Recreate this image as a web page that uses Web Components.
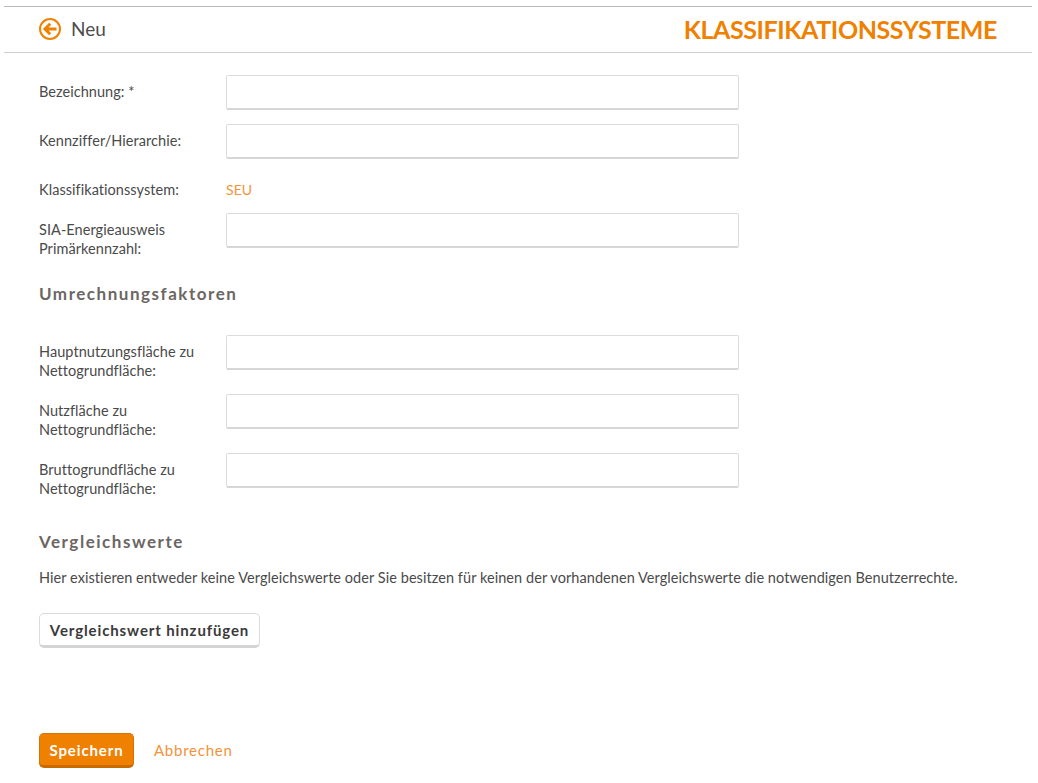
<!DOCTYPE html>
<html lang="de">
<head>
<meta charset="utf-8">
<title>Klassifikationssysteme</title>
<style>
    html, body { margin: 0; padding: 0; background: #fff; }
    body { font-family: "Lato", "Noto Sans", sans-serif; color: #4a4a4a; font-variant-ligatures: none; }
</style>
</head>
<body>
<app-page>
    <page-header slot="header" caption="Neu" title-text="KLASSIFIKATIONSSYSTEME"></page-header>

    <form-row label="Bezeichnung: *"></form-row>
    <form-row label="Kennziffer/Hierarchie:"></form-row>
    <form-row label="Klassifikationssystem:" value="SEU"></form-row>
    <form-row label="SIA-Energieausweis Primärkennzahl:" class="narrow"></form-row>

    <section-title class="first">Umrechnungsfaktoren</section-title>

    <form-row label="Hauptnutzungsfläche zu Nettogrundfläche:"></form-row>
    <form-row label="Nutzfläche zu Nettogrundfläche:"></form-row>
    <form-row label="Bruttogrundfläche zu Nettogrundfläche:"></form-row>

    <section-title class="second">Vergleichswerte</section-title>
    <info-text>Hier existieren entweder keine Vergleichswerte oder Sie besitzen für keinen der vorhandenen Vergleichswerte die notwendigen Benutzerrechte.</info-text>

    <app-button class="add">Vergleichswert hinzufügen</app-button>

    <form-actions>
        <app-button kind="primary">Speichern</app-button>
        <a slot="link" href="#">Abbrechen</a>
    </form-actions>
</app-page>

<script>
class AppPage extends HTMLElement {
    constructor() {
        super();
        this.attachShadow({ mode: 'open' });
        this.shadowRoot.innerHTML = `
            <style>
                :host { display: block; padding-top: 6px; }
                .content { padding: 22px 0 0 39px; display: flex; flex-direction: column; align-items: flex-start; }
            </style>
            <slot name="header"></slot>
            <div class="content"><slot></slot></div>
        `;
    }
}

class PageHeader extends HTMLElement {
    constructor() {
        super();
        this.attachShadow({ mode: 'open' });
        this.shadowRoot.innerHTML = `
            <style>
                :host { display: flex; align-items: center; justify-content: space-between; box-sizing: border-box;
                    width: 1028px; height: 47px; margin-left: 4px; padding: 0 35px 2px;
                    border-top: 1px solid #b9b9b9; border-bottom: 1px solid #cfcfcf; }
                .left { display: flex; align-items: center; gap: 10px; }
                svg { display: block; width: 22px; height: 22px; }
                .caption { font-size: 19px; color: #4d4d4d; }
                .title { font-size: 25px; font-weight: 700; color: #f08000; letter-spacing: -0.4px; }
            </style>
            <div class="left">
                <svg viewBox="0 0 22 22" fill="none" stroke="#f08000" stroke-width="2">
                    <circle cx="11" cy="11" r="10"></circle>
                    <path d="M17.5 11H6.5M11.2 5.8 6 11l5.2 5.2" stroke-width="3"></path>
                </svg>
                <span class="caption"></span>
            </div>
            <span class="title"></span>
        `;
    }

    connectedCallback() {
        this.shadowRoot.querySelector('.caption').textContent = this.getAttribute('caption');
        this.shadowRoot.querySelector('.title').textContent = this.getAttribute('title-text');
    }
}

class FormRow extends HTMLElement {
    constructor() {
        super();
        this.attachShadow({ mode: 'open' });
        this.shadowRoot.innerHTML = `
            <style>
                :host { display: flex; align-items: flex-start; width: 700px; min-height: 26px; margin-bottom: 14px;
                    font-size: 14.5px; line-height: 19px; letter-spacing: 0.05px; color: #4a4a4a; }
                .label { width: 187px; padding-top: 7px; box-sizing: border-box; padding-right: 20px; }
                .control { box-sizing: border-box; width: 513px; height: 35px; border: 1px solid #dcdcdc;
                    border-bottom: 2px solid #d6d6d6; border-radius: 2px; background: #fff; margin: 0; padding: 0 8px; outline: none; }
                .value { padding-top: 7px; color: #f3923a; font-size: 14px; }
            </style>
            <div class="label"></div>
        `;
    }

    connectedCallback() {
        this.shadowRoot.querySelector('.label').textContent = this.getAttribute('label');
        if (this.hasAttribute('value')) {
            const value = document.createElement('div');
            value.className = 'value';
            value.textContent = this.getAttribute('value');
            this.shadowRoot.appendChild(value);
        } else {
            const input = document.createElement('input');
            input.className = 'control';
            input.type = 'text';
            this.shadowRoot.appendChild(input);
        }
    }
}

class SectionTitle extends HTMLElement {
    constructor() {
        super();
        this.attachShadow({ mode: 'open' });
        this.shadowRoot.innerHTML = `
            <style>
                :host { display: block; font-size: 17px; line-height: 22px; font-weight: 700; letter-spacing: 1.53px; color: #6b6663; }
                :host(.first) { margin: 11px 0 30px; }
                :host(.second) { margin: 19px 0 15px; }
            </style>
            <slot></slot>
        `;
    }
}

class InfoText extends HTMLElement {
    constructor() {
        super();
        this.attachShadow({ mode: 'open' });
        this.shadowRoot.innerHTML = `
            <style>
                :host { display: block; font-size: 14.5px; line-height: 19px; color: #4a4a4a; margin-bottom: 26px; letter-spacing: 0.06px; }
            </style>
            <slot></slot>
        `;
    }
}

class AppButton extends HTMLElement {
    constructor() {
        super();
        this.attachShadow({ mode: 'open' });
        this.shadowRoot.innerHTML = `
            <style>
                :host { display: inline-flex; align-items: center; justify-content: center; box-sizing: border-box; height: 35px;
                    padding: 0 10px; border: 1px solid #dcdcdc; border-bottom: 3px solid #d4d4d4; border-radius: 5px;
                    background: #fff; color: #3a3a3a; font-size: 15px; font-weight: 700; letter-spacing: 0.88px; white-space: nowrap; cursor: pointer; }
                :host([kind="primary"]) { width: 95px; padding: 0; background: #f08000; color: #fff; border: 1px solid #d87300; border-bottom: 3px solid #c96c00; }
                :host(.add) { width: 221px; }
            </style>
            <slot></slot>
        `;
    }
}

class FormActions extends HTMLElement {
    constructor() {
        super();
        this.attachShadow({ mode: 'open' });
        this.shadowRoot.innerHTML = `
            <style>
                :host { display: flex; align-items: center; gap: 20px; margin-top: 85px; }
                ::slotted(a) { color: #f3923a; text-decoration: none; font-size: 15px; letter-spacing: 0.75px; margin-bottom: 2px; }
            </style>
            <slot></slot>
            <slot name="link"></slot>
        `;
    }
}

customElements.define('app-page', AppPage);
customElements.define('page-header', PageHeader);
customElements.define('form-row', FormRow);
customElements.define('section-title', SectionTitle);
customElements.define('info-text', InfoText);
customElements.define('app-button', AppButton);
customElements.define('form-actions', FormActions);
</script>
</body>
</html>
